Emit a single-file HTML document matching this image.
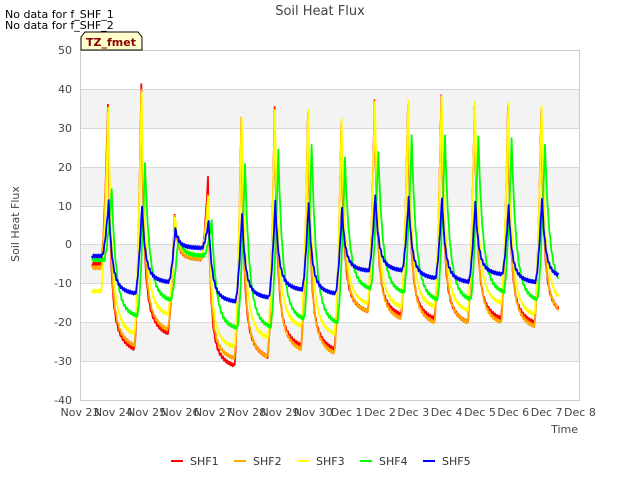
<!DOCTYPE html>
<html><head><meta charset="utf-8"><style>
body{margin:0;background:#fff;width:640px;height:480px;overflow:hidden;font-family:"Liberation Sans","DejaVu Sans",sans-serif}
svg text{font-family:"DejaVu Sans","Liberation Sans",sans-serif}
</style></head><body>
<svg id="s" width="640" height="480" xmlns="http://www.w3.org/2000/svg">
<rect x="80" y="89" width="500" height="39" fill="#f3f3f3"/>
<rect x="80" y="167" width="500" height="39" fill="#f3f3f3"/>
<rect x="80" y="244" width="500" height="39" fill="#f3f3f3"/>
<rect x="80" y="322" width="500" height="39" fill="#f3f3f3"/>
<g stroke="#d8d8d8" stroke-width="1">
<line x1="80" y1="50.5" x2="580" y2="50.5"/><line x1="80" y1="89.5" x2="580" y2="89.5"/>
<line x1="80" y1="128.5" x2="580" y2="128.5"/><line x1="80" y1="167.5" x2="580" y2="167.5"/>
<line x1="80" y1="206.5" x2="580" y2="206.5"/><line x1="80" y1="244.5" x2="580" y2="244.5"/>
<line x1="80" y1="283.5" x2="580" y2="283.5"/><line x1="80" y1="322.5" x2="580" y2="322.5"/>
<line x1="80" y1="361.5" x2="580" y2="361.5"/>
</g>
<rect x="80.5" y="50.5" width="499" height="350" fill="none" stroke="#ccc"/>
<g id="lines" fill="none" stroke-width="1.8" stroke-linejoin="round"></g>
<g font-size="11" fill="#444" text-anchor="end">
<text x="72" y="54">50</text><text x="72" y="93">40</text><text x="72" y="132">30</text>
<text x="72" y="171">20</text><text x="72" y="210">10</text><text x="72" y="248">0</text>
<text x="72" y="287">-10</text><text x="72" y="326">-20</text><text x="72" y="365">-30</text>
<text x="72" y="404">-40</text>
</g>
<g id="xl" font-size="11" fill="#444" text-anchor="middle"></g>
<text x="578" y="433" font-size="11" fill="#444" text-anchor="end">Time</text>
<text x="320" y="15" font-size="13" fill="#444" text-anchor="middle">Soil Heat Flux</text>
<text x="19" y="224" font-size="11" fill="#444" text-anchor="middle" transform="rotate(-90 19 224)">Soil Heat Flux</text>
<text x="5" y="18" font-size="11" fill="#000">No data for f_SHF_1</text>
<text x="5" y="29" font-size="11" fill="#000">No data for f_SHF_2</text>
<path d="M81 50 V37 L85 32 H138 L142 37 V50 Z" fill="#ffffcc" stroke="#000"/>
<text x="111" y="46" font-size="11" font-weight="bold" fill="#8b0000" text-anchor="middle">TZ_fmet</text>
<g font-size="11" fill="#333">
<line x1="171" y1="461" x2="183" y2="461" stroke="#f00" stroke-width="2"/><text x="190" y="465">SHF1</text>
<line x1="234" y1="461" x2="246" y2="461" stroke="#ffa500" stroke-width="2"/><text x="253" y="465">SHF2</text>
<line x1="297" y1="461" x2="309" y2="461" stroke="#ff0" stroke-width="2"/><text x="316" y="465">SHF3</text>
<line x1="360" y1="461" x2="372" y2="461" stroke="#0f0" stroke-width="2"/><text x="379" y="465">SHF4</text>
<line x1="423" y1="461" x2="435" y2="461" stroke="#00f" stroke-width="2"/><text x="442" y="465">SHF5</text>
</g>
</svg>
<script>
var labels=["Nov 23","Nov 24","Nov 25","Nov 26","Nov 27","Nov 28","Nov 29","Nov 30","Dec 1","Dec 2","Dec 3","Dec 4","Dec 5","Dec 6","Dec 7","Dec 8"];
var xl=document.getElementById('xl'),h='';
for(var i=0;i<16;i++){h+='<text x="'+(80+i*33.33)+'" y="416">'+labels[i]+'</text>';}
xl.innerHTML=h;
var P=[[36,34,35,14,11],[41,40,39,21,10],[8,7,7,2,4],[17,13,12,6,6],[33,32,33,21,8],[35,35,34,24,11],[34,33,35,26,11],[31,30,32,22,9],[37,36,37,24,13],[36,35,37,28,12],[38,36,38,28,12],[36,35,37,28,11],[35,34,36,27,10],[35,33,36,26,12]];
var T=[[-28,-27,-24,-19,-13],[-24,-23,-19,-15,-10],[-4,-4,-3,-3,-1],[-32,-30,-27,-22,-15],[-30,-30,-25,-22,-14],[-27,-28,-22,-20,-12],[-28,-29,-24,-21,-13],[-18,-18,-16,-12,-7],[-19,-20,-17,-13,-7],[-20,-21,-17,-15,-9],[-21,-21,-18,-15,-10],[-20,-21,-16,-13,-8],[-21,-22,-19,-15,-10],[-19,-19,-16,-12,-9]];
var start=[-5,-6,-12,-4,-3];
var pk=[0.84,0.84,0.85,0.95,0.86],tf=[0.07,0.08,0.09,0.12,0.09],rs=[0.63,0.63,0.63,0.72,0.66];
var cols=['#f00','#ffa500','#ff0','#0f0','#00f'];
function dec(s,a,b,dt){var k=0.75*Math.exp(-dt/tf[s])+0.25*Math.exp(-dt/0.3);return b+(a-b)*k;}
function val(s,t){var d=Math.floor(t),f=t-d;
 if(t>=14){return dec(s,P[13][s],T[13][s],t-13-pk[s]);}
 if(f<rs[s]){if(d==0)return start[s];return dec(s,P[d-1][s],T[d-1][s],f+1-pk[s]);}
 var base=d==0?start[s]:dec(s,P[d-1][s],T[d-1][s],rs[s]+1-pk[s]);
 if(f<pk[s]){var u=(f-rs[s])/(pk[s]-rs[s]);u=Math.pow(u,1.6);return base+(P[d][s]-base)*u;}
 return dec(s,P[d][s],T[d][s],f-pk[s]);}
var g=document.getElementById('lines'),out='';
for(var s=0;s<5;s++){var pts=[];
 for(var t=0.36;t<=14.35;t+=0.01){var v=val(s,t)+Math.sin(t*97+s*3)*0.4;
  pts.push((80+t*33.33).toFixed(1)+','+(244.4-v*3.889).toFixed(1));}
 out+='<polyline stroke="'+cols[s]+'" points="'+pts.join(' ')+'"/>';}
g.innerHTML=out;
</script>
</body></html>
